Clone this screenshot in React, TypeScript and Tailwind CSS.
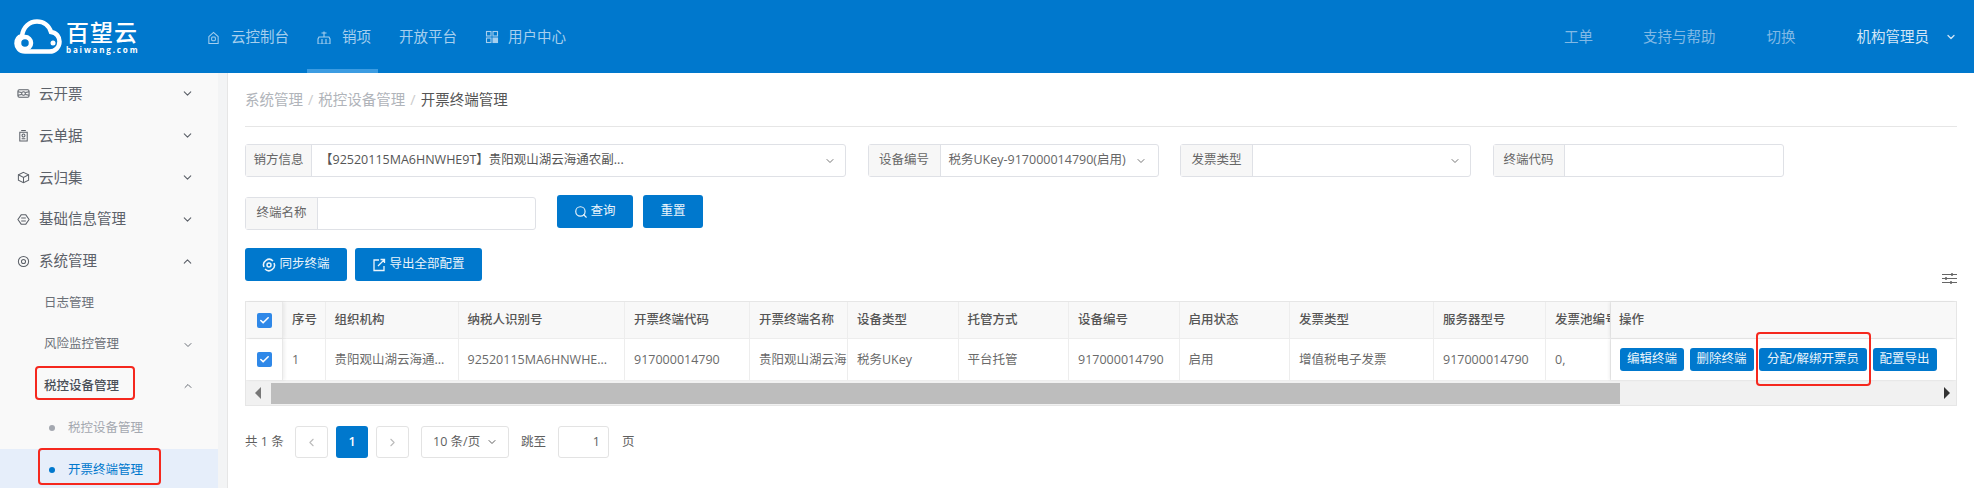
import { Check, ChevronDown, ChevronLeft, ChevronRight, ChevronUp, Search } from "lucide-react";

const FONT = "font-['Open_Sans','Noto_Sans_CJK_SC',sans-serif]";

// Small line icons used by the nav and the sidebar
const Glyph = ({ name, className }: { name: string; className?: string }) => {
  const paths: Record<string, React.ReactNode> = {
    home: (
      <>
        <path d="M2 6.500 7 2l5 4.500V14H2z" />
        <rect x="5" y="7" width="4" height="4" rx="1" />
      </>
    ),
    sales: (
      <>
        <path d="M7 1.500v5M4.500 3h5M2 7h10l1 2v5H1V9z" />
        <path d="M5 9v5M9 9v5" />
      </>
    ),
    grid: (
      <>
        <rect x="1.500" y="1.500" width="4.500" height="4.500" />
        <rect x="8" y="1.500" width="4.500" height="4.500" />
        <rect x="1.500" y="8" width="4.500" height="4.500" />
        <rect x="8" y="8" width="4.500" height="4.500" fill="currentColor" />
      </>
    ),
    invoice: (
      <>
        <rect x="1" y="3" width="12" height="8" rx="1.500" />
        <circle cx="7" cy="7" r="2" />
        <path d="M1 5l4 1M13 5l-4 1M1 9l4-1M13 9l-4-1" />
      </>
    ),
    bill: (
      <>
        <path d="M4.500 1.500h5M3 3.500h8v9.500H3z" />
        <circle cx="7" cy="7" r="1.600" />
        <path d="M5 10.500h4" />
      </>
    ),
    box: (
      <>
        <path d="M7 1.500 12.500 4v6L7 12.500 1.500 10V4z" />
        <path d="M1.500 4 7 7l5.500-3M7 7v5.500" />
      </>
    ),
    base: (
      <>
        <path d="M4.500 2h5L13 7l-3.500 5h-5L1 7z" />
        <path d="M4.500 5.500h5M4.500 8.500h5" />
      </>
    ),
    system: (
      <>
        <circle cx="7" cy="7" r="5.500" />
        <circle cx="7" cy="7" r="2.200" />
      </>
    ),
  };
  return (
    <svg viewBox="0 0 14 14" fill="none" stroke="currentColor" strokeWidth="1.100" className={className}>
      {paths[name]}
    </svg>
  );
};

const Logo = () => (
  <div className="flex items-center gap-[4px]">
    <svg viewBox="0 0 48 35" className="h-[35px] w-[48px]" fill="none">
      <path
        d="M11 32.500C5.500 32.500 2.500 28.500 2.500 24.500c0-3.500 2-6.500 5.500-7.500C9 8 15.500 2.500 23 2.500c6.500 0 12 4 14 10.500 5.500.5 8.500 5 8.500 9.500 0 5.500-4 10-10 10z"
        stroke="white"
        strokeWidth="4.500"
      />
      <circle cx="11" cy="24" r="6" stroke="white" strokeWidth="4.500" />
      <circle cx="39" cy="24" r="2.500" fill="white" />
    </svg>
    <div className="flex flex-col">
      <span className="text-[23px] leading-[25px] tracking-[1px] font-medium text-white">百望云</span>
      <span className="text-[8px] leading-[9px] tracking-[1.850px] font-bold text-white">baiwang.com</span>
    </div>
  </div>
);

const Header = () => (
  <header className="relative flex h-[73px] items-center bg-[#0078cd] text-[14.5px] text-[#a6cfee]">
    <div className="ml-[14px] w-[193px]">
      <Logo />
    </div>
    <div className="flex items-center gap-[11px]">
      <Glyph name="home" className="h-[14px] w-[13px]" />
      <span>云控制台</span>
    </div>
    <div className="ml-[28px] flex items-center gap-[11px]">
      <Glyph name="sales" className="h-[14px] w-[14px]" />
      <span>销项</span>
    </div>
    <span className="ml-[28px]">开放平台</span>
    <div className="ml-[28px] flex items-center gap-[9px]">
      <Glyph name="grid" className="h-[14px] w-[14px]" />
      <span>用户中心</span>
    </div>
    <div className="ml-auto flex items-center pr-[17px] text-[#81b9e5]">
      <span>工单</span>
      <span className="ml-[50px]">支持与帮助</span>
      <span className="ml-[51px]">切换</span>
      <span className="ml-[61px] text-[#d3e6f6]">机构管理员</span>
      <ChevronDown className="ml-[16px] h-[12px] w-[12px] text-[#d3e6f6]" strokeWidth={2.5} />
    </div>
    {/* active tab marker */}
    <div className="absolute bottom-0 left-[307px] h-[4px] w-[71px] bg-[#3c9ce2]" />
  </header>
);

type MenuRow = {
  label: string;
  icon?: string;
  arrow?: "up" | "down";
  level?: number;
  dot?: boolean;
  active?: boolean;
  marked?: boolean;
};

const menu: MenuRow[] = [
  { label: "云开票", icon: "invoice", arrow: "down" },
  { label: "云单据", icon: "bill", arrow: "down" },
  { label: "云归集", icon: "box", arrow: "down" },
  { label: "基础信息管理", icon: "base", arrow: "down" },
  { label: "系统管理", icon: "system", arrow: "up" },
  { label: "日志管理", level: 1 },
  { label: "风险监控管理", level: 1, arrow: "down" },
  { label: "税控设备管理", level: 1, arrow: "up", marked: true },
  { label: "税控设备管理", level: 2, dot: true },
  { label: "开票终端管理", level: 2, dot: true, active: true, marked: true },
];

const Sidebar = () => (
  <aside className="flex w-[228px] shrink-0 border-r border-[#e6e6e6] bg-[#f3f4f5]">
    <div className="h-[415px] w-[218px] bg-[#f9f9f9]">
      {menu.map((row, i) => {
        if (row.level === 2) {
          return (
            <div
              key={i}
              className={`relative flex h-[41.8px] items-center pl-[49px] text-[12.5px] ${
                row.active ? "bg-[#e6eefa] text-[#0078cd]" : "text-[#a4a8b0]"
              }`}
            >
              <span className={`mr-[13px] h-[6px] w-[6px] rounded-full ${row.active ? "bg-[#0078cd]" : "bg-[#a4a8b0]"}`} />
              <span>{row.label}</span>
              {row.marked && (
                <div className="absolute left-[38px] top-[-1px] h-[37px] w-[123px] rounded-[4px] border-2 border-[#f5281e]" />
              )}
            </div>
          );
        }
        if (row.level === 1) {
          return (
            <div key={i} className="relative flex h-[41.8px] items-center pl-[44px] pr-[24px] text-[12.5px] text-[#6b7078]">
              <span className={row.marked ? "font-medium text-[#4a4f57]" : ""}>{row.label}</span>
              {row.arrow === "down" && <ChevronDown className="ml-auto h-[12px] w-[12px]" />}
              {row.arrow === "up" && <ChevronUp className="ml-auto h-[12px] w-[12px]" />}
              {row.marked && (
                <div className="absolute left-[35px] top-[0px] h-[34px] w-[100px] rounded-[4px] border-2 border-[#f5281e]" />
              )}
            </div>
          );
        }
        return (
          <div key={i} className="flex h-[41.8px] items-center pl-[17px] pr-[24px] text-[14.5px] text-[#5c6169]">
            <Glyph name={row.icon!} className="mr-[9px] h-[13px] w-[13px]" />
            <span>{row.label}</span>
            {row.arrow === "down" ? (
              <ChevronDown className="ml-auto h-[13px] w-[13px]" />
            ) : (
              <ChevronUp className="ml-auto h-[13px] w-[13px]" />
            )}
          </div>
        );
      })}
    </div>
  </aside>
);

const Field = ({
  label,
  width,
  labelWidth,
  value,
  arrow,
  valueClass,
  arrowClass,
}: {
  label: string;
  width: string;
  labelWidth: string;
  value?: string;
  arrow?: boolean;
  valueClass?: string;
  arrowClass?: string;
}) => (
  <div className={`flex h-[33px] shrink-0 rounded-[3px] border border-[#dfe1e6] text-[12.5px] ${width}`}>
    <div className={`flex shrink-0 items-center justify-center border-r border-[#dfe1e6] bg-[#f7f7f7] text-[#666] ${labelWidth}`}>
      {label}
    </div>
    <div className="flex min-w-0 flex-1 items-center text-[#666]">
      {value && <span className={`truncate ${valueClass ?? ""}`}>{value}</span>}
      {arrow && <ChevronDown className={`ml-auto h-[12px] w-[12px] shrink-0 text-[#777] ${arrowClass ?? "mr-[9px]"}`} />}
    </div>
  </div>
);

const Button = ({ children, className }: { children: React.ReactNode; className: string }) => (
  <button className={`flex items-center justify-center rounded-[3px] bg-[#0078cd] text-[12.5px] text-[#eaf4fb] ${className}`}>
    {children}
  </button>
);

const columns = [
  { title: "序号", value: "1", w: "w-[42.5px]" },
  { title: "组织机构", value: "贵阳观山湖云海通...", w: "w-[133px]" },
  { title: "纳税人识别号", value: "92520115MA6HNWHE...", w: "w-[166.5px]" },
  { title: "开票终端代码", value: "917000014790", w: "w-[125px]" },
  { title: "开票终端名称", value: "贵阳观山湖云海", w: "w-[98px]" },
  { title: "设备类型", value: "税务UKey", w: "w-[110.5px]" },
  { title: "托管方式", value: "平台托管", w: "w-[110.5px]" },
  { title: "设备编号", value: "917000014790", w: "w-[110.5px]" },
  { title: "启用状态", value: "启用", w: "w-[110.5px]" },
  { title: "发票类型", value: "增值税电子发票", w: "w-[144px]" },
  { title: "服务器型号", value: "917000014790", w: "w-[112px]" },
  { title: "发票池编号", value: "0,", w: "w-[65px]" },
];

const CheckCell = () => (
  <div className="flex w-[37px] shrink-0 items-center justify-center border-r border-[#e8e8e8] shadow-[2px_0_3px_rgba(0,0,0,0.06)]">
    <span className="flex h-[15px] w-[15px] items-center justify-center rounded-[2px] bg-[#2f88e8]">
      <Check className="h-[11px] w-[11px] text-white" strokeWidth={3.5} />
    </span>
  </div>
);

const DataTable = () => (
  <div className="relative h-[105px] border border-[#e6e6e6] text-[12.5px]">
    <div className="flex h-[37px] border-b border-[#ededed] bg-[#f8f8f8]">
      <CheckCell />
      {columns.map((c) => (
        <div key={c.title} className={`shrink-0 overflow-hidden whitespace-nowrap border-r border-[#ededed] pl-[9px] font-medium leading-[36px] text-[#555] ${c.w}`}>
          {c.title}
        </div>
      ))}
      <div className="flex-1 pl-[8px] font-medium leading-[36px] text-[#555] shadow-[-2px_0_3px_rgba(0,0,0,0.06)]">操作</div>
    </div>
    <div className="flex h-[42px] border-b border-[#ededed] bg-white">
      <CheckCell />
      {columns.map((c) => (
        <div key={c.title} className={`shrink-0 overflow-hidden whitespace-nowrap border-r border-[#ededed] pl-[9px] leading-[41px] text-[#6a6a6a] ${c.w}`}>
          {c.value}
        </div>
      ))}
      <div className="flex flex-1 items-center gap-[5.5px] pl-[9px] shadow-[-2px_0_3px_rgba(0,0,0,0.06)]">
        <Button className="h-[23px] w-[64px]">编辑终端</Button>
        <Button className="h-[23px] w-[64px]">删除终端</Button>
        <Button className="h-[23px] w-[108px]">分配/解绑开票员</Button>
        <Button className="h-[23px] w-[64px]">配置导出</Button>
      </div>
    </div>
    {/* scrollbar */}
    <div className="flex h-[24px] items-center bg-[#f1f1f1]">
      <span className="ml-[9px] h-0 w-0 border-y-[6px] border-r-[6px] border-y-transparent border-r-[#777]" />
      <div className="ml-[10px] h-[21px] w-[1349px] bg-[#bdbdbd]" />
      <span className="ml-auto mr-[6px] h-0 w-0 border-y-[6px] border-l-[6px] border-y-transparent border-l-[#333]" />
    </div>
    {/* red annotation round the assign button */}
    <div className="absolute left-[1510px] top-[30px] h-[54px] w-[115px] rounded-[4px] border-2 border-[#f5281e]" />
  </div>
);

const Pagination = () => (
  <div className="mt-[20px] flex h-[32px] items-center text-[12.5px] text-[#5f5f5f]">
    <span className="w-[50px]">共 1 条</span>
    <div className="flex h-[32px] w-[33px] items-center justify-center rounded-[3px] border border-[#e3e3e3] text-[#bbb]">
      <ChevronLeft className="h-[13px] w-[13px]" />
    </div>
    <div className="ml-[8px] flex h-[32px] w-[32px] items-center justify-center rounded-[3px] bg-[#0078cd] font-semibold text-white">1</div>
    <div className="ml-[8px] flex h-[32px] w-[33px] items-center justify-center rounded-[3px] border border-[#e3e3e3] text-[#bbb]">
      <ChevronRight className="h-[13px] w-[13px]" />
    </div>
    <div className="ml-[12px] flex h-[32px] w-[88px] items-center rounded-[3px] border border-[#e3e3e3] pl-[11px]">
      10 条/页
      <ChevronDown className="ml-[6px] h-[12px] w-[12px]" />
    </div>
    <span className="ml-[12px]">跳至</span>
    <div className="ml-[12px] flex h-[32px] w-[51px] items-center justify-end rounded-[3px] border border-[#e3e3e3] pr-[8px]">1</div>
    <span className="ml-[13px]">页</span>
  </div>
);

export default function App() {
  return (
    <div className={`h-[488px] overflow-hidden bg-white ${FONT}`}>
      <Header />
      <div className="flex">
        <Sidebar />
        <main className="flex-1 pl-[17px] pr-[17px]">
          {/* Breadcrumb */}
          <div className="flex h-[54px] items-center gap-[5px] border-b border-[#e6e6e6] text-[14.5px] text-[#b0b4ba]">
            <span>系统管理</span>
            <span className="text-[#ccc]">/</span>
            <span>税控设备管理</span>
            <span className="text-[#ccc]">/</span>
            <span className="text-[#555]">开票终端管理</span>
          </div>

          {/* Filters */}
          <div className="mt-[17px] flex gap-[21.5px]">
            <Field
              label="销方信息"
              width="w-[601px]"
              labelWidth="w-[66px]"
              value="【92520115MA6HNWHE9T】贵阳观山湖云海通农副..."
              valueClass="pl-[8px] text-[#555]"
              arrow
            />
            <Field
              label="设备编号"
              width="w-[291px]"
              labelWidth="w-[72px]"
              value="税务UKey-917000014790(启用)"
              valueClass="pl-[8px]"
              arrow
              arrowClass="mr-[11px]"
            />
            <Field label="发票类型" width="w-[291px]" labelWidth="w-[72px]" arrow />
            <Field label="终端代码" width="w-[291px]" labelWidth="w-[71px]" />
          </div>

          <div className="mt-[20px] flex items-start">
            <Field label="终端名称" width="w-[291px]" labelWidth="w-[72px]" />
            <Button className="ml-[21px] mt-[-2px] h-[33px] w-[76px] gap-[2px]">
              <Search className="h-[14px] w-[14px]" />
              查询
            </Button>
            <Button className="ml-[10px] mt-[-2px] h-[33px] w-[60px]">重置</Button>
          </div>

          <div className="relative mt-[18px] flex h-[33px] gap-[8px]">
            <Button className="h-[33px] w-[102px] gap-[3px]">
              <svg viewBox="0 0 14 14" className="h-[14px] w-[14px]" fill="none" stroke="currentColor" strokeWidth="1.500">
                <path d="M2 9A5.500 5.500 0 0 1 11 3M12 5a5.500 5.500 0 0 1-9 6" />
                <circle cx="7" cy="7" r="2" />
              </svg>
              同步终端
            </Button>
            <Button className="h-[33px] w-[127px] gap-[3px]">
              <svg viewBox="0 0 14 14" className="h-[14px] w-[14px]" fill="none" stroke="currentColor" strokeWidth="1.300">
                <path d="M7 2H2v10.500h10V8M6 8l6-6M8.500 1.500H12.500V5" />
              </svg>
              导出全部配置
            </Button>
            {/* column settings */}
            <svg viewBox="0 0 15 11" className="absolute right-0 top-[25px] h-[11px] w-[15px]" fill="none" stroke="#666" strokeWidth="1">
              <path d="M0 1.500h15M0 5.500h15M0 9.500h15" />
              <path d="M10 0v3M4 4v3M9 8v3" strokeWidth="1.500" />
            </svg>
          </div>

          <div className="mt-[20px]">
            <DataTable />
          </div>
          <Pagination />
        </main>
      </div>
    </div>
  );
}
